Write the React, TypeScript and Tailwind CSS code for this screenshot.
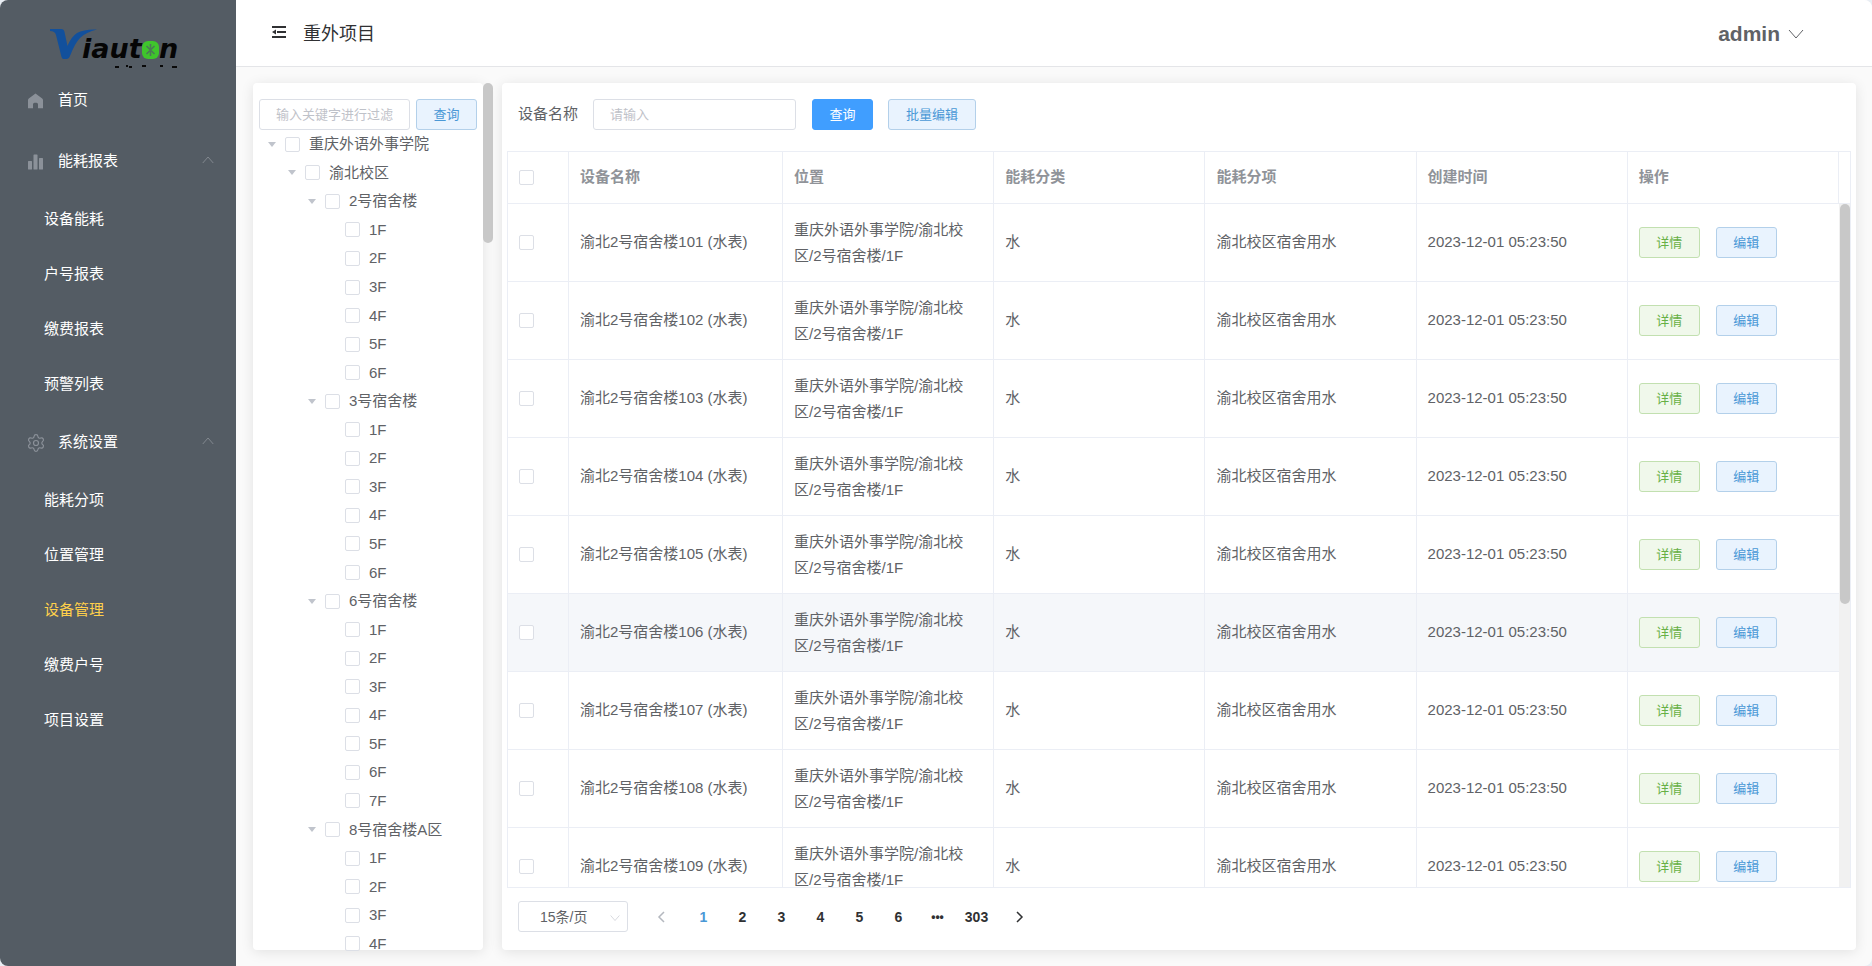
import { ReactNode } from 'react';
import { Settings } from 'lucide-react';

type MenuGroup = { title: string; icon: ReactNode; items: string[] };
type TreeRow = { label: string; depth: 0 | 1 | 2 | 3 };

const HomeIcon = () => (
  <svg viewBox="0 0 17 16" className="w-[17px] h-4 fill-[#8b9199]">
    <path d="M8.5 0.5 L15.2 5.6 Q16 6.3 16 7.2 V15.2 H11 V11.5 Q11 9.8 9.5 9.8 H7.5 Q6 9.8 6 11.5 V15.2 H1 V7.2 Q1 6.3 1.8 5.6 Z" />
  </svg>
);

const ChartIcon = () => (
  <svg viewBox="0 0 17 16" className="w-[17px] h-4 fill-[#8b9199]">
    <rect x="1" y="7" width="4" height="8.5" rx="0.6" />
    <rect x="6.5" y="0.5" width="4" height="15" rx="0.6" />
    <rect x="12" y="4" width="4" height="11.5" rx="0.6" />
  </svg>
);

const Chevron = ({ d, className }: { d: string; className: string }) => (
  <svg viewBox="0 0 16 16" className={className} fill="none" stroke="currentColor">
    <path d={d} />
  </svg>
);

const UP = 'M1 12 L8 4 L15 12';
const DOWN = 'M1 4 L8 12 L15 4';
const LEFT = 'M10 3 L5 8 L10 13';
const RIGHT = 'M6 3 L11 8 L6 13';

const groups: MenuGroup[] = [
  {
    title: '能耗报表',
    icon: <ChartIcon />,
    items: ['设备能耗', '户号报表', '缴费报表', '预警列表'],
  },
  {
    title: '系统设置',
    icon: <Settings className="w-5 h-5 -ml-px -mr-0.5 text-[#8b9199]" strokeWidth={1.4} />,
    items: ['能耗分项', '位置管理', '设备管理', '缴费户号', '项目设置'],
  },
];

const floors = (count: number): TreeRow[] =>
  Array.from({ length: count }, (_, i) => ({ label: `${i + 1}F`, depth: 3 }));

const tree: TreeRow[] = [
  { label: '重庆外语外事学院', depth: 0 },
  { label: '渝北校区', depth: 1 },
  { label: '2号宿舍楼', depth: 2 },
  ...floors(6),
  { label: '3号宿舍楼', depth: 2 },
  ...floors(6),
  { label: '6号宿舍楼', depth: 2 },
  ...floors(7),
  { label: '8号宿舍楼A区', depth: 2 },
  ...floors(4),
];

const indent = ['pl-[13px]', 'pl-[33px]', 'pl-[53px]', 'pl-[73px]'];

const devices = [101, 102, 103, 104, 105, 106, 107, 108, 109].map(no => ({
  no,
  name: `渝北2号宿舍楼${no} (水表)`,
  place: '重庆外语外事学院/渝北校区/2号宿舍楼/1F',
  kind: '水',
  item: '渝北校区宿舍用水',
  created: '2023-12-01 05:23:50',
}));

const columns = ['设备名称', '位置', '能耗分类', '能耗分项', '创建时间', '操作'];

const checkbox =
  'appearance-none block shrink-0 w-[15px] h-[15px] rounded-xs border border-[#dcdfe6] bg-white';
const button = 'h-[31px] shrink-0 rounded-[3px] border text-[13px] leading-none';
const plainBlue = 'border-[#b3d0ea] bg-[#e9f3fe] text-[#4a98d6]';
const plainGreen = 'border-[#c2e0b0] bg-[#f0f8eb] text-[#67b045]';
const field =
  'h-[31px] min-w-0 rounded-[3px] border border-[#dcdfe6] bg-white px-4 text-[13px] text-[#606266] placeholder:text-[#bfc2c9] outline-none';

function Logo() {
  return (
    <svg
      viewBox="0 0 140 44"
      className="w-[140px] h-11 font-['DejaVu_Sans',sans-serif]"
      role="img"
      aria-label="Viauton"
    >
      <path
        d="M2 4 H13 Q16 4 16.5 7 L19.5 21 Q23 12 29 8 Q36 4 49 4.5 Q38 7 32 13 Q27 18 22 31 Q21 34 19 34 H15.5 Q14 34 13.5 32 L8 10 Q7 6 2 6 Z"
        fill="#12509c"
      />
      <g fontSize="27" fontWeight="700" fontStyle="italic" fill="#050505">
        <text x="34" y="33">iaut</text>
        <text x="111" y="33">n</text>
      </g>
      <rect x="94" y="16" width="17" height="18" rx="6" fill="#3fc52c" />
      <path d="M98.5 21 L106.5 29 M106.5 21 L98.5 29 M102.5 19 V31" stroke="#4a7a55" strokeWidth="1.6" />
      <path d="M67 42 H71 M78 41 H80 M81 42 H84 M94 41 H98 M112 41 H115 M124 42 H129" stroke="#0a0a0a" strokeWidth="2" />
    </svg>
  );
}

function Sidebar() {
  return (
    <aside className="flex flex-col w-[236px] shrink-0 bg-[#545c64] text-[15px] text-white">
      <div className="h-[70px] pl-12 pt-[25px]">
        <Logo />
      </div>
      <nav>
        <a href="#home" className="flex items-center gap-3.5 h-[61px] pl-[27px]">
          <HomeIcon />
          首页
        </a>
        {groups.map(group => (
          <div key={group.title}>
            <button className="flex items-center gap-3.5 w-full h-[61px] pl-[27px] pr-[22px]">
              {group.icon}
              {group.title}
              <Chevron d={UP} className="ml-auto mb-1 w-3 h-3 text-[#92979d]" />
            </button>
            {group.items.map(item => (
              <a
                key={item}
                href={`#${item}`}
                className={`flex items-center h-[55px] pl-11 ${item === '设备管理' ? 'text-[#ffd04b]' : ''}`}
              >
                {item}
              </a>
            ))}
          </div>
        ))}
      </nav>
    </aside>
  );
}

function Header() {
  return (
    <header className="flex items-center justify-between h-[67px] shrink-0 pt-0.5 pl-9 pr-[68px] border-b border-[#e4e5e8] bg-white">
      <div className="flex items-center gap-[17px]">
        <button aria-label="收起菜单" className="pb-1">
          <svg viewBox="0 0 14 12" className="w-3.5 h-3 fill-[#303133]">
            <path d="M0 0 H14 V2 H0 Z M5 5 H14 V7 H5 Z M0 10 H14 V12 H0 Z M0 6 L4 3.4 V8.6 Z" />
          </svg>
        </button>
        <h1 className="text-lg text-[#303133]">重外项目</h1>
      </div>
      <button className="flex items-center gap-2 text-[21px] font-bold text-[#606266]">
        admin
        <Chevron d={DOWN} className="w-4 h-4" />
      </button>
    </header>
  );
}

function LocationTree() {
  return (
    <section className="flex w-[240px] shrink-0">
      <div className="flex flex-1 min-w-0 flex-col rounded-sm bg-white pt-4 shadow-[0_2px_13px_rgba(0,0,0,0.1)]">
        <div className="flex gap-1.5 px-1.5">
          <input className={`${field} flex-1`} placeholder="输入关键字进行过滤" aria-label="关键字" />
          <button className={`${button} ${plainBlue} w-[61px]`}>查询</button>
        </div>
        <ul className="grid flex-1 auto-rows-fr -mb-2 text-[15px] text-[#606266]">
          {tree.map((row, i) => (
            <li key={i} className={`flex items-center ${indent[row.depth]}`}>
              <svg viewBox="0 0 8 5" className="w-2 h-[5px] mx-0.5 fill-[#c0c4cc]">
                {row.depth < 3 && <path d="M0 0 H8 L4 5 Z" />}
              </svg>
              <label className="flex items-center gap-[9px] pl-[7px] leading-4">
                <input type="checkbox" className={checkbox} />
                {row.label}
              </label>
            </li>
          ))}
        </ul>
      </div>
      <div className="w-2.5 shrink-0">
        <div className="h-40 rounded-full bg-[#c8c8c8]" />
      </div>
    </section>
  );
}

function DeviceTable() {
  return (
    <div className="flex flex-1 min-h-0 mt-[21px] mx-[5px] border border-[#ebeef5] overflow-hidden">
      <div className="flex-1 min-w-0 overflow-hidden">
        <table className="w-full table-fixed border-separate border-spacing-0 text-left text-[15px] text-[#606266]">
          <colgroup>
            <col className="w-[61px]" />
            <col className="w-[214px]" />
            <col span={5} />
          </colgroup>
          <thead className="text-[#909399]">
            <tr className="h-[52px]">
              <th className="border-b border-r border-[#ebeef5] pl-[11px]">
                <input type="checkbox" className={checkbox} aria-label="全选" />
              </th>
              {columns.map(col => (
                <th key={col} className="border-b border-r border-[#ebeef5] px-[11px] font-bold">
                  {col}
                </th>
              ))}
            </tr>
          </thead>
          <tbody>
            {devices.map(d => (
              <tr
                key={d.no}
                className={`h-[78px] *:border-b *:border-r *:border-[#ebeef5] *:px-[11px] *:last:border-r-0 ${d.no === 106 ? 'bg-[#f5f7fa]' : ''}`}
              >
                <td>
                  <input type="checkbox" className={checkbox} aria-label={d.name} />
                </td>
                <td>{d.name}</td>
                <td className="leading-[26px]">{d.place}</td>
                <td>{d.kind}</td>
                <td>{d.item}</td>
                <td>{d.created}</td>
                <td>
                  <div className="flex gap-4">
                    <button className={`${button} ${plainGreen} w-[61px]`}>详情</button>
                    <button className={`${button} ${plainBlue} w-[61px]`}>编辑</button>
                  </div>
                </td>
              </tr>
            ))}
          </tbody>
        </table>
      </div>
      {/* Scrollbar gutter */}
      <div className="flex flex-col w-[11px]">
        <div className="h-[52px] shrink-0 border-b border-[#ebeef5]" />
        <div className="flex-1 bg-[#f1f1f1] pl-px">
          <div className="h-[400px] rounded-full bg-[#c8c8c8]" />
        </div>
      </div>
    </div>
  );
}

function Pagination() {
  const pages = ['1', '2', '3', '4', '5', '6', '•••', '303'];
  return (
    <div className="flex items-center pt-[13px] pb-[18px] pl-4">
      <div className="relative mr-3.5">
        <select
          className="appearance-none block w-[110px] h-[31px] rounded-[3px] border border-[#dcdfe6] bg-white pl-[21px] text-sm text-[#606266]"
          aria-label="每页条数"
        >
          <option>15条/页</option>
        </select>
        <Chevron d={DOWN} className="absolute right-2 top-3 w-2.5 h-2.5 text-[#c0c4cc]" />
      </div>
      <button className="flex justify-center w-[39px] text-[#b4b8bf]" aria-label="上一页">
        <Chevron d={LEFT} className="w-4 h-4 stroke-[1.5]" />
      </button>
      <div className="flex px-[3px]">
        {pages.map(page => (
          <button
            key={page}
            className={`w-[39px] font-bold ${page === '•••' ? 'text-xs' : 'text-sm'} ${page === '1' ? 'text-[#4a98d6]' : 'text-[#303133]'}`}
          >
            {page}
          </button>
        ))}
      </div>
      <button className="flex justify-center w-[39px] text-[#303133]" aria-label="下一页">
        <Chevron d={RIGHT} className="w-4 h-4 stroke-[1.5]" />
      </button>
    </div>
  );
}

export default function App() {
  return (
    <div className="h-screen bg-[#e9eef4] font-['Liberation_Sans','Noto_Sans_CJK_SC',sans-serif]">
      <div className="flex h-full overflow-hidden rounded-lg bg-[#fafafa]">
        <Sidebar />
        <div className="flex flex-1 min-w-0 flex-col">
          <Header />
          <main className="flex flex-1 min-h-0 gap-[9px] py-4 pl-[17px] pr-4">
            <LocationTree />
            <section className="flex flex-1 min-w-0 flex-col rounded-sm bg-white pt-4 shadow-[0_2px_13px_rgba(0,0,0,0.1)]">
              <div className="flex items-center pl-4">
                <label htmlFor="device-name" className="mr-[15px] text-[15px] text-[#606266]">
                  设备名称
                </label>
                <input id="device-name" className={`${field} w-[203px] mr-4`} placeholder="请输入" />
                <button className={`${button} w-[61px] mr-[15px] border-[#409eff] bg-[#409eff] text-white`}>
                  查询
                </button>
                <button className={`${button} ${plainBlue} w-[88px]`}>批量编辑</button>
              </div>
              <DeviceTable />
              <Pagination />
            </section>
          </main>
        </div>
      </div>
    </div>
  );
}
